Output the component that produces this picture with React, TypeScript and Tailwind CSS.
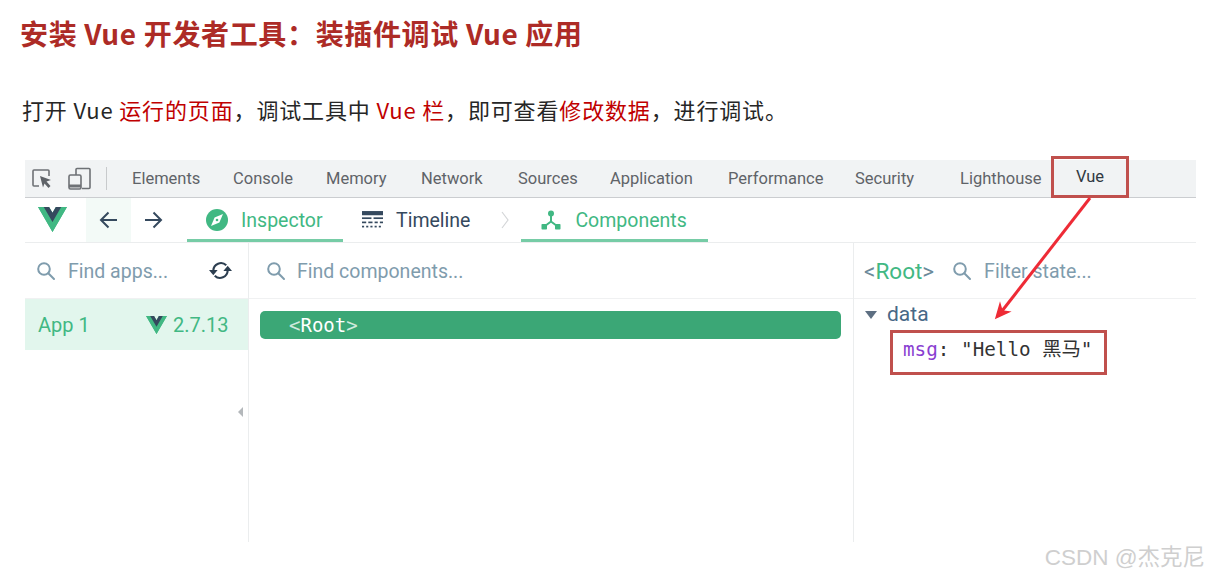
import React from "react";

const tabs = [
    { label: "Elements", cls: "ml-[25px] w-[101px]" },
    { label: "Console", cls: "w-[93px]" },
    { label: "Memory", cls: "w-[95px]" },
    { label: "Network", cls: "w-[97px]" },
    { label: "Sources", cls: "w-[92px]" },
    { label: "Application", cls: "w-[118px]" },
    { label: "Performance", cls: "w-[127px]" },
    { label: "Security", cls: "w-[105px]" },
    { label: "Lighthouse", cls: "w-[91px]" },
];

const roboto = "font-['Roboto',sans-serif]";
const mono = "font-['DejaVu_Sans_Mono','Noto_Sans_CJK_SC',monospace]";

function VueLogo({ className }: { className: string }) {
    return (
        <svg viewBox="0 0 256 221" className={className}>
            <path fill="#41B883" d="M204.8 0H256L128 220.8 0 0h97.92L128 51.2 157.44 0h47.36Z" />
            <path fill="#41B883" d="M0 0l128 220.8L256 0h-51.2L128 132.48 50.56 0H0Z" />
            <path fill="#35495E" d="M50.56 0L128 133.12 204.8 0h-47.36L128 51.2 97.92 0H50.56Z" />
        </svg>
    );
}

function SearchIcon() {
    return (
        <svg viewBox="0 0 20 20" className="w-[20px] h-[20px] shrink-0" fill="none" stroke="#7f9cad" strokeWidth="2">
            <circle cx="8" cy="8" r="5.8" />
            <path d="M12.3 12.3L18 18" strokeLinecap="round" />
        </svg>
    );
}

function Inspect() {
    return (
        <svg viewBox="0 0 22 22" className="w-[22px] h-[22px]" fill="none">
            <path d="M8 18H3a1 1 0 0 1-1-1V3a1 1 0 0 1 1-1h14a1 1 0 0 1 1 1v5" stroke="#6e7175" strokeWidth="1.6" />
            <path d="M9 8l11 4-4.5 1.6 4 4.4-2 2-4-4.4L12 19.5Z" fill="#5f6368" />
        </svg>
    );
}

function Device() {
    return (
        <svg viewBox="0 0 23 23" className="w-[23px] h-[23px]" fill="none" stroke="#6e7175" strokeWidth="1.6">
            <path d="M8 8V2.5a1 1 0 0 1 1-1h12a1 1 0 0 1 1 1v18a1 1 0 0 1-1 1h-7" />
            <rect x="1" y="8" width="12" height="14" rx="1.5" />
            <path d="M1 19h12" strokeWidth="3" />
        </svg>
    );
}

function Compass() {
    return (
        <svg viewBox="0 0 22 22" className="w-[22px] h-[22px]">
            <circle cx="11" cy="11" r="11" fill="#41b883" />
            <path d="M17 5l-3.6 8.4L5 17l3.6-8.4Z" fill="#fff" />
            <circle cx="11" cy="11" r="1.3" fill="#41b883" />
        </svg>
    );
}

function RefreshIcon() {
    return (
        <svg viewBox="0 0 24 24" className="w-[23px] h-[23px] ml-[29px] shrink-0" fill="none" stroke="#2c3e50" strokeWidth="2.2">
            <path d="M4.5 12A8 8 0 0 1 18 6.5" />
            <path d="M19.5 12A8 8 0 0 1 6 17.5" />
            <path d="M0 11.5h9L4.5 17Z" fill="#2c3e50" stroke="none" />
            <path d="M15 12.5h9L19.5 7Z" fill="#2c3e50" stroke="none" />
        </svg>
    );
}

function TimelineIcon() {
    return (
        <svg viewBox="0 0 20 20" className="w-[21px] h-[21px]" fill="#35495e">
            <rect x="0" y="1" width="20" height="4" />
            <rect x="0" y="7" width="9" height="1.6" />
            <rect x="11" y="7" width="9" height="1.6" />
            <rect x="0" y="11" width="4" height="1.6" />
            <rect x="6" y="11" width="4" height="1.6" />
            <rect x="12" y="11" width="3" height="1.6" />
            <rect x="17" y="11" width="3" height="1.6" />
            <rect x="0" y="15" width="2" height="1.6" />
            <rect x="4" y="15" width="2" height="1.6" />
            <rect x="8" y="15" width="2" height="1.6" />
            <rect x="12" y="15" width="2" height="1.6" />
            <rect x="16" y="15" width="2" height="1.6" />
        </svg>
    );
}

function ComponentsIcon() {
    return (
        <svg viewBox="0 0 20 20" className="w-[20px] h-[20px]" fill="#41b883">
            <circle cx="10" cy="3.5" r="3" />
            <rect x="0.5" y="14" width="5.5" height="5.5" rx="0.8" />
            <rect x="14" y="14" width="5.5" height="5.5" rx="0.8" />
            <path d="M10 5v6.5M10 11.5L4 16M10 11.5l6 4.5" fill="none" stroke="#41b883" strokeWidth="2" />
        </svg>
    );
}

export default function App() {
    return (
        <div className="w-[1209px] h-[577px] bg-white overflow-hidden relative font-['Noto_Sans_CJK_SC',sans-serif]">
            <h1 className="pt-[13px] pl-[20px] h-[78px] text-[28px] leading-[40px] font-bold text-[#ad2b26] tracking-[0.65px] whitespace-nowrap">
                安装 Vue 开发者工具：装插件调试 Vue 应用
            </h1>
            <p className="pl-[22px] h-[82px] pt-[12px] text-[22px] leading-[38px] text-[#262626] tracking-[0.85px] whitespace-nowrap">
                打开 Vue <span className="text-[#c00000]">运行的页面</span>，调试工具中 <span className="text-[#c00000]">Vue 栏</span>，即可查看<span className="text-[#c00000]">修改数据</span>，进行调试。
            </p>

            <div className={`ml-[25px] w-[1171px] h-[382px] flex flex-col relative ${roboto}`}>
                {/* devtools tab strip */}
                <div className="h-[38px] shrink-0 bg-[#f1f3f4] border-b border-[#cbcdd0] flex items-center pl-[6px] text-[16.5px] text-[#5f6368]">
                    <div className="w-[26px] flex"><Inspect /></div>
                    <div className="ml-[11px] flex"><Device /></div>
                    <div className="ml-[15px] w-px h-[23px] bg-[#c8cacc]" />
                    {tabs.map((t) => (
                        <div key={t.label} className={`${t.cls} pt-[2px] whitespace-nowrap`}>
                            {t.label}
                        </div>
                    ))}
                    <div className="text-[#303942] w-[78px] h-full flex items-center justify-center border-b-2 border-[#8fa8d8]">
                        Vue
                    </div>
                </div>

                {/* vue devtools nav */}
                <div className="h-[45px] shrink-0 border-b border-[#ebedee] flex items-stretch text-[19.5px]">
                    <div className="w-[61px] flex items-center pl-[13px]">
                        <VueLogo className="w-[29px] h-[25px] -mt-[2px]" />
                    </div>
                    <div className="w-[45px] bg-[#f3faf7] flex items-center justify-center">
                        <svg viewBox="0 0 20 20" className="w-[20px] h-[20px]" fill="none" stroke="#35495e" strokeWidth="2">
                            <path d="M18 10H2M9.5 2.5L2 10l7.5 7.5" />
                        </svg>
                    </div>
                    <div className="w-[44px] flex items-center justify-center">
                        <svg viewBox="0 0 20 20" className="w-[20px] h-[20px]" fill="none" stroke="#35495e" strokeWidth="2">
                            <path d="M2 10h16M10.5 2.5L18 10l-7.5 7.5" />
                        </svg>
                    </div>
                    <div className="ml-[12px] w-[156px] border-y-[3px] border-t-transparent border-b-[#76cca6] flex items-center pl-[19px] gap-[13px] text-[#41b883]">
                        <Compass />
                        <span className="pt-[2px]">Inspector</span>
                    </div>
                    <div className="ml-[19px] flex items-center gap-[13px] text-[#35495e]">
                        <TimelineIcon />
                        <span className="pt-[2px]">Timeline</span>
                    </div>
                    <div className="ml-[30px] flex items-center">
                        <svg viewBox="0 0 10 20" className="w-[10px] h-[20px]" fill="none" stroke="#d4d6d8" strokeWidth="1.2">
                            <path d="M2 2l6 8-6 8" />
                        </svg>
                    </div>
                    <div className="ml-[11px] w-[187px] border-y-[3px] border-t-transparent border-b-[#76cca6] flex items-center pl-[20px] gap-[14px] text-[#41b883]">
                        <ComponentsIcon />
                        <span className="pt-[2px]">Components</span>
                    </div>
                </div>

                {/* panes */}
                <div className="flex-1 flex min-h-0 text-[19.5px]">
                    <div className="w-[224px] shrink-0 border-r border-[#ebedee] relative">
                        <div className="h-[56px] border-b border-[#f0f1f2] flex items-center pl-[11px] gap-[12px] text-[#7f9cad]">
                            <SearchIcon />
                            <span className="w-[100px] shrink-0 pt-[2px] whitespace-nowrap">Find apps...</span>
                            <RefreshIcon />
                        </div>
                        <div className="h-[51px] bg-[#e2f6ed] flex items-center pl-[13px] text-[#41b883] text-[20px]">
                            <span className="w-[108px]">App 1</span>
                            <VueLogo className="w-[21px] h-[18px]" />
                            <span className="ml-[6px]">2.7.13</span>
                        </div>
                        <div className="absolute right-[5px] top-[164px] w-0 h-0 border-y-[5px] border-y-transparent border-r-[5px] border-r-[#b4b8bb]" />
                    </div>

                    <div className="w-[605px] shrink-0 border-r border-[#ebedee]">
                        <div className="h-[56px] border-b border-[#f0f1f2] flex items-center pl-[17px] gap-[11px] text-[#7f9cad]">
                            <SearchIcon />
                            <span className="pt-[2px]">Find components...</span>
                        </div>
                        <div className="pt-[12px] pl-[11px] pr-[12px]">
                            <div className={`h-[28px] rounded-[5px] bg-[#3ba776] pl-[29px] flex items-center text-[19px] text-white ${mono}`}>
                                <span className="text-[#cfeadd]">&lt;</span>Root<span className="text-[#cfeadd]">&gt;</span>
                            </div>
                        </div>
                    </div>

                    <div className="flex-1 min-w-0">
                        <div className="h-[56px] border-b border-[#f0f1f2] flex items-center pl-[10px] text-[#7f9cad]">
                            <span className="pt-[2px] text-[22.5px] text-[#6b8a9a]">&lt;<span className="text-[#41b883]">Root</span>&gt;</span>
                            <span className="ml-[18px] mr-[12px]"><SearchIcon /></span>
                            <span className="pt-[2px]">Filter state...</span>
                        </div>
                        <div className="pl-[11px] pt-[3px] text-[#486887]">
                            <div className="flex items-center h-[26px] gap-[10px]">
                                <div className="w-0 h-0 border-x-[6px] border-x-transparent border-t-[8px] border-t-[#5d6f82]" />
                                <span className="text-[21px]">data</span>
                            </div>
                            <div className={`pl-[38px] mt-[9px] text-[19.3px] leading-[26px] text-[#333333] whitespace-nowrap ${mono}`}>
                                <span className="text-[#8a3fd1]">msg</span>: "Hello 黑马"
                            </div>
                        </div>
                    </div>
                </div>

                {/* red callouts drawn over the panel */}
                <div className="absolute left-[1026px] top-[-4px] w-[78px] h-[42px] border-[3px] border-[#c0504d]" />
                <div className="absolute left-[865px] top-[170px] w-[217px] h-[45px] border-[3px] border-[#c0504d]" />
                <svg className="absolute left-[960px] top-[36px] w-[110px] h-[130px]" viewBox="0 0 110 130" fill="none">
                    <path d="M105 2L17 115" stroke="#ee2b36" strokeWidth="3" />
                    <path d="M11 122L15 108 17 115 24 116Z" fill="#ee2b36" stroke="#ee2b36" strokeWidth="1.5" />
                </svg>
            </div>

            <div className="absolute right-[4px] top-[544px] text-[22.5px] leading-[28px] text-[#cfcfcf] whitespace-nowrap font-['Liberation_Sans','Noto_Sans_CJK_SC',sans-serif]">
                CSDN @杰克尼
            </div>
        </div>
    );
}
